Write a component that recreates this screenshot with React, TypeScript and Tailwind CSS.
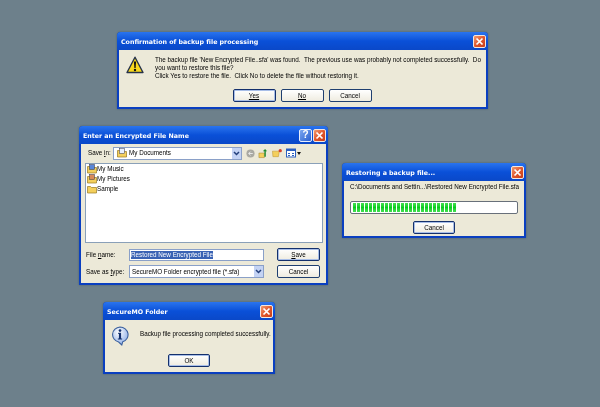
import React from "react";

const body = "font-['Liberation_Sans',sans-serif] text-[6.3px] leading-[8px] text-black";

function CloseBtn() {
  return (
    <div className="w-[13px] h-[13px] rounded-[2px] border border-[#f4e8e0] bg-gradient-to-br from-[#f09a70] via-[#e0582c] to-[#c83c18] flex items-center justify-center">
      <svg width="9" height="9" viewBox="0 0 9 9"><path d="M1.5 1.5l6 6M7.5 1.5l-6 6" stroke="#fff" strokeWidth="1.7" /></svg>
    </div>
  );
}

function HelpBtn() {
  return (
    <div className="w-[13px] h-[13px] rounded-[2px] border border-[#e8eefc] bg-gradient-to-br from-[#7ba6ef] to-[#2a5fd0] flex items-center justify-center text-white font-['Liberation_Sans',sans-serif] font-bold text-[10px] leading-none">?</div>
  );
}

function Win({ cls, title, help, children }: { cls: string; title: string; help?: boolean; children: React.ReactNode }) {
  return (
    <div className={`absolute flex flex-col rounded-t-[4px] bg-[#0a3fc0] shadow-[0_0_2px_rgba(40,60,80,0.6)] ${cls}`}>
      <div className="h-[18px] shrink-0 flex items-center pl-[4px] pr-[2px] gap-[1px] rounded-t-[4px] bg-gradient-to-b from-[#2a74ee] via-[#0a50d8] to-[#0a48c8]">
        <span className="flex-1 pt-[1px] font-['DejaVu_Sans',sans-serif] font-bold text-[6.3px] text-white whitespace-nowrap">{title}</span>
        {help && <HelpBtn />}
        <CloseBtn />
      </div>
      <div className="flex-1 min-h-0 mx-[2px] mb-[2px] bg-[#ece9d8] flex flex-col">{children}</div>
    </div>
  );
}

function Btn({ label, cls, focus }: { label: React.ReactNode; cls: string; focus?: boolean }) {
  return (
    <div className={`h-[13px] rounded-[2px] border ${focus ? "border-[#14306c] shadow-[inset_0_0_0_1px_#a8bee8]" : "border-[#1f3f70]"} bg-gradient-to-b from-white to-[#efece0] flex items-center justify-center ${body} ${cls}`}>
      {label}
    </div>
  );
}

function Warning() {
  return (
    <svg width="18" height="18" viewBox="0 0 18 18" className="shrink-0">
      <path d="M9 1.2L17 16.5H1z" fill="#f9d81c" stroke="#26324a" strokeWidth="1.4" strokeLinejoin="round" />
      <path d="M7.9 5.5h2.2L9.6 12H8.4z" fill="#111" />
      <circle cx="9" cy="14" r="1.2" fill="#111" />
    </svg>
  );
}

function Info() {
  return (
    <svg width="18" height="20" viewBox="0 0 20 22" className="shrink-0">
      <defs>
        <radialGradient id="ib" cx="0.4" cy="0.3" r="0.8">
          <stop offset="0" stopColor="#fff" />
          <stop offset="1" stopColor="#7fa4e4" />
        </radialGradient>
      </defs>
      <path d="M10 1a9 8.5 0 0 1 3 16.5l-1 3.5-3.5-3.3A9 8.5 0 0 1 10 1z" fill="url(#ib)" stroke="#3a5f9c" strokeWidth="1.2" />
      <circle cx="10" cy="5" r="1.5" fill="#12306e" />
      <path d="M8 7.5h3.2v6.2h1.2v1.3H7.6v-1.3h1.2V8.8H8z" fill="#12306e" />
    </svg>
  );
}

function Folder({ badge }: { badge?: string }) {
  return (
    <svg width="10" height="10" viewBox="0 0 10 10" className="shrink-0">
      <path d="M.5 2.5h3l1 1h5v5.5h-9z" fill="#f4cf5c" stroke="#9a7a20" strokeWidth="0.7" />
      {badge && <rect x="2.5" y="0.5" width="5" height="5" fill={badge} stroke="#334" strokeWidth="0.5" />}
    </svg>
  );
}

function Toolbar() {
  return (
    <div className="flex items-center ml-[4px]">
      <svg width="9" height="9" viewBox="0 0 10 10"><circle cx="5" cy="5" r="4.5" fill="#a9a9a2" /><path d="M7.5 5H3M5 3L3 5l2 2" stroke="#eee" strokeWidth="1" fill="none" /></svg>
      <svg width="10" height="11" viewBox="0 0 11 11" className="ml-[3px]"><path d="M1 5h6v5H1z" fill="#f4cf5c" stroke="#9a7a20" strokeWidth="0.5" /><path d="M7 9V3H5.3L7.8.5 10 3H8.6v6z" fill="#1f8a2e" /></svg>
      <svg width="11" height="10" viewBox="0 0 12 10" className="ml-[4px]"><path d="M.5 3h7.5l-1 6H1z" fill="#f4cf5c" stroke="#b58a20" strokeWidth="0.5" /><circle cx="9" cy="2.5" r="1.8" fill="#d8402a" /></svg>
      <div className="flex items-center ml-[3px]">
        <svg width="10" height="10" viewBox="0 0 10 10"><rect x=".5" y="1" width="9" height="8" fill="#fff" stroke="#2a5fc0" /><rect x=".5" y="1" width="9" height="2" fill="#2a5fc0" /><path d="M2 5h2v1H2zM6 5h2v1H6zM2 7h2v1H2zM6 7h2v1H6z" fill="#2a5fc0" /></svg>
        <svg width="4" height="3" viewBox="0 0 4 3" className="ml-[1px]"><path d="M0 0h4L2 3z" fill="#111" /></svg>
      </div>
    </div>
  );
}

function ComboArrow() {
  return (
    <div className="w-[9px] self-stretch bg-[#c4d3f4] flex items-center justify-center shrink-0">
      <svg width="7" height="5" viewBox="0 0 7 5"><path d="M1 1l2.5 2.5L6 1" stroke="#24407c" strokeWidth="1.5" fill="none" /></svg>
    </div>
  );
}

function Row({ label, badge }: { label: string; badge?: string }) {
  return (
    <div className={`h-[10px] flex items-center ${body}`}>
      <Folder badge={badge} />
      <span>{label}</span>
    </div>
  );
}

export default function App() {
  return (
    <div className="relative w-[600px] h-[407px] overflow-hidden bg-[#6d808b] blur-[0.25px]">
      <Win cls="left-[117px] top-[32px] w-[371px] h-[77px]" title="Confirmation of backup file processing">
        <div className="flex pl-[7px] pt-[5px] gap-[11px]">
          <div className="pt-[1px]"><Warning /></div>
          <div className={`${body} whitespace-nowrap pt-[1px]`}>
            <div>The backup file 'New Encrypted File..sfa' was found.&nbsp; The previous use was probably not completed successfully.&nbsp; Do</div>
            <div>you want to restore this file?</div>
            <div>Click Yes to restore the file.&nbsp; Click No to delete the file without restoring it.</div>
          </div>
        </div>
        <div className="flex justify-center gap-[5px] mt-[9px] pr-[1px]">
          <Btn cls="w-[43px]" focus label={<span className="underline">Yes</span>} />
          <Btn cls="w-[43px]" label={<span className="underline">No</span>} />
          <Btn cls="w-[43px]" label="Cancel" />
        </div>
      </Win>

      <Win cls="left-[79px] top-[126px] w-[249px] h-[159px]" title="Enter an Encrypted File Name" help>
        <div className="flex items-center h-[18px] pl-[7px]">
          <span className={`${body} w-[25px] whitespace-nowrap`}>Save <span className="underline">i</span>n:</span>
          <div className="w-[129px] h-[13px] bg-white border border-[#8aa0c8] flex items-center gap-[2px] pl-[3px]">
            <Folder badge="#e8f0ff" />
            <span className={`flex-1 ${body}`}>My Documents</span>
            <ComboArrow />
          </div>
          <Toolbar />
        </div>
        <div className="ml-[4px] mr-[3px] mt-[1px] h-[80px] bg-white border border-[#8aa0b8] pl-[1px] flex flex-col">
          <Row label="My Music" badge="#5a86d8" />
          <Row label="My Pictures" badge="#d88a5a" />
          <Row label="Sample" />
        </div>
        <div className="flex items-center mt-[5px] pl-[5px]">
          <span className={`${body} w-[43px] whitespace-nowrap`}>File <span className="underline">n</span>ame:</span>
          <div className="w-[135px] h-[12px] bg-white border border-[#8aa0c8] flex items-center pl-[1px]">
            <span className={`${body} !text-white bg-[#3a62b4] whitespace-nowrap`}>Restored New Encrypted File</span>
          </div>
          <Btn cls="w-[43px] ml-[13px]" focus label={<span><span className="underline">S</span>ave</span>} />
        </div>
        <div className="flex items-center mt-[4px] pl-[5px]">
          <span className={`${body} w-[43px] whitespace-nowrap`}>Save as <span className="underline">t</span>ype:</span>
          <div className="w-[135px] h-[13px] bg-white border border-[#8aa0c8] flex items-center pl-[2px]">
            <span className={`flex-1 ${body} whitespace-nowrap`}>SecureMO Folder encrypted file (*.sfa)</span>
            <ComboArrow />
          </div>
          <Btn cls="w-[43px] ml-[13px]" label="Cancel" />
        </div>
      </Win>

      <Win cls="left-[342px] top-[163px] w-[184px] h-[75px]" title="Restoring a backup file...">
        <div className={`${body} pl-[6px] pt-[2px] whitespace-nowrap`}>C:\Documents and Settin...\Restored New Encrypted File.sfa</div>
        <div className="mx-[6px] mt-[10px] h-[13px] bg-white border border-[#68707a] rounded-[2px] flex items-center gap-[1px] pl-[2px]">
          {Array.from({ length: 26 }).map((_, i) => (
            <div key={i} className="w-[3px] h-[9px] bg-gradient-to-b from-[#40e050] via-[#08cc20] to-[#40e050]" />
          ))}
        </div>
        <div className="flex justify-center mt-[7px]">
          <Btn cls="w-[42px]" focus label="Cancel" />
        </div>
      </Win>

      <Win cls="left-[103px] top-[302px] w-[172px] h-[72px]" title="SecureMO Folder">
        <div className="flex items-start pl-[6px] pt-[6px] gap-[11px]">
          <Info />
          <span className={`${body} whitespace-nowrap pt-[4px]`}>Backup file processing completed successfully.</span>
        </div>
        <div className="flex justify-center mt-[8px]">
          <Btn cls="w-[42px]" focus label="OK" />
        </div>
      </Win>
    </div>
  );
}
